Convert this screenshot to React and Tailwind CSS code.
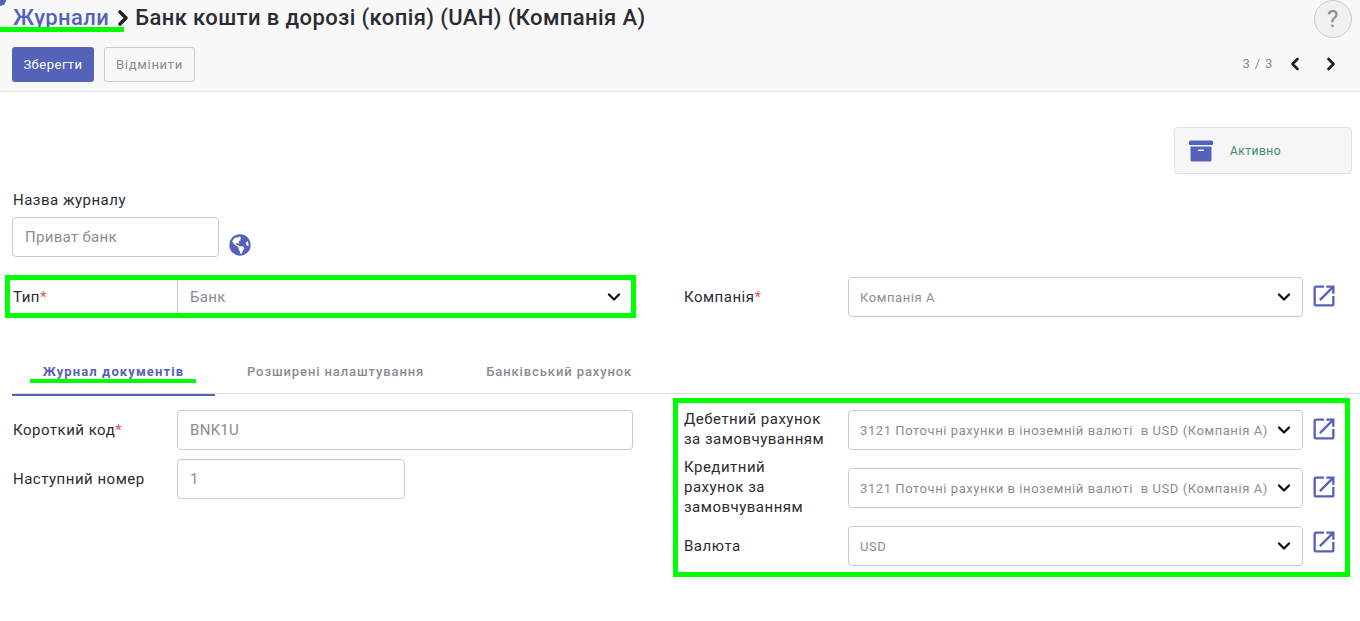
import React from "react";
import { ChevronDown, ChevronLeft, ChevronRight } from "lucide-react";
import { FaArchive, FaGlobeAmericas } from "react-icons/fa";
import { MdOpenInNew } from "react-icons/md";

const Req = () => <span className="text-[#ef5350]">*</span>;

function Select({ value, small = true }) {
  return (
    <div className="flex-1 h-10 min-w-0 flex items-center justify-between bg-white border border-[#c9c9d1] rounded-[4px] pl-[11px] pr-[8px]">
      <span className={small ? "text-[13px] leading-[15px] pt-[1px] tracking-[0.57px] text-[#8b8b93] whitespace-pre" : "text-[15px] pl-[1px] pt-[1px] tracking-[0.3px] text-[#8b8b93]"}>{value}</span>
      <ChevronDown size={20} strokeWidth={2.8} className="text-[#111] shrink-0" />
    </div>
  );
}

function Open({ last = false }) {
  return <MdOpenInNew size={28} className={last ? "text-[#5562ba] ml-[7px] shrink-0 mb-[8px]" : "text-[#5562ba] ml-[7px] shrink-0 mb-[3px]"} />;
}

function Input({ value, w }) {
  return (
    <div className={`h-10 flex items-center bg-white border border-[#c9c9d1] rounded-[4px] px-[12px] text-[15px] tracking-[0.3px] text-[#8b8b93] ${w}`}>{value}</div>
  );
}

const ACCOUNT = "3121 Поточні рахунки в іноземній валюті  в USD (Компанія А)";

export default function App() {
  return (
    <div className="relative h-[621px] overflow-hidden bg-white text-[15px] tracking-[0.5px] text-[#2b2b33] font-['Roboto',sans-serif]">
      {/* header */}
      <header className="h-[92px] bg-[#f8f8f8] border-b border-[#e6e6e6] pl-[12px] pr-[8px]">
        <div className="h-[47px] flex items-start justify-between">
          <h1 className="flex items-center pt-[5px] pl-[1px] text-[22px] font-medium leading-[26px] tracking-[0.4px]">
            <span className="text-[#5562ba]">Журнали</span>
            <ChevronRight size={24} strokeWidth={3.6} className="ml-[2px] text-[#222]" />
            <span>Банк кошти в дорозі (копія) (UAH) (Компанія А)</span>
          </h1>
          <div className="w-[38px] h-[38px] rounded-full bg-[#f0f0f0] border border-[#c9c9d1] flex items-center justify-center text-[24px] text-[#8b8b93]">?</div>
        </div>
        <div className="flex items-center justify-between">
          <div className="flex gap-[10px]">
            <button className="h-[35px] w-[82px] rounded-[3px] bg-[#5562ba] text-white text-[13px] tracking-[0.5px]">Зберегти</button>
            <button className="h-[35px] w-[91px] rounded-[3px] bg-[#f8f8f8] border border-[#c9c9d1] text-[#8b8b93] text-[13px] tracking-[0.7px]">Відмінити</button>
          </div>
          <div className="flex items-center pr-[11px] mt-[-1px]">
            <span className="text-[13px] tracking-[0.8px] text-[#8b8b93] mr-[12px]">3 / 3</span>
            <ChevronLeft size={20} strokeWidth={3.2} className="text-[#222]" />
            <ChevronRight size={20} strokeWidth={3.2} className="text-[#222] ml-[16px]" />
          </div>
        </div>
      </header>

      {/* body */}
      <main className="px-[12px]">
        <div className="flex justify-end pt-[35px] mr-[-4px]">
          <div className="w-[178px] h-[47px] flex items-center bg-[#f6f6f9] border border-[#e0e0e6] rounded-[4px] pl-[14px]">
            <FaArchive size={24} className="text-[#5562ba]" />
            <span className="ml-[17px] text-[12px] tracking-[0.5px] text-[#3f8c5f]">Активно</span>
          </div>
        </div>

        <div className="mt-[16px] pl-[1px] leading-[20px]">Назва журналу</div>
        <div className="mt-[7px] flex items-start">
          <Input value="Приват банк" w="w-[207px]" />
          <FaGlobeAmericas size={22} className="ml-[10px] mt-[17px] text-[#5562ba]" />
        </div>

        <div className="mt-[20px] grid grid-cols-[621px_654px] gap-x-[51px]">
          <div className="flex items-center">
            <div className="w-[165px] pl-[1px]">Тип<Req /></div>
            <Select value="Банк" small={false} />
          </div>
          <div className="flex items-center">
            <div className="w-[164px]">Компанія<Req /></div>
            <Select value="Компанія А" />
            <Open />
          </div>
        </div>

        {/* tabs */}
        <div className="mt-[31px] mr-[-12px] h-[46px] flex border-b border-[#dedede] text-[13px] font-medium tracking-[0.9px]">
          <div className="w-[203px] h-[48px] pt-[1px] flex items-center justify-center border-b-2 border-[#5562ba] text-[#5562ba] font-bold tracking-[1.1px]">Журнал документів</div>
          <div className="flex items-center h-[46px] pt-[1px] ml-[32px] text-[#8b8b93]">Розширені налаштування</div>
          <div className="flex items-center h-[46px] pt-[1px] ml-[62px] text-[#8b8b93]">Банківський рахунок</div>
        </div>

        <div className="mt-[16px] grid grid-cols-[621px_654px] gap-x-[51px]">
          <div className="flex flex-col gap-[9px]">
            <div className="flex items-center">
              <div className="w-[165px] pl-[1px]">Короткий код<Req /></div>
              <Input value="BNK1U" w="flex-1" />
            </div>
            <div className="flex items-center">
              <div className="w-[165px] pl-[1px]">Наступний номер</div>
              <Input value="1" w="w-[228px]" />
            </div>
          </div>
          <div className="flex flex-col gap-[18px] leading-[20px]">
            <div className="flex items-center">
              <div className="w-[164px] mt-[-2px]">Дебетний рахунок<br />за замовчуванням</div>
              <Select value={ACCOUNT} />
              <Open />
            </div>
            <div className="flex items-center h-10">
              <div className="w-[164px] mt-[-3px]">Кредитний<br />рахунок за<br />замовчуванням</div>
              <Select value={ACCOUNT} />
              <Open />
            </div>
            <div className="flex items-center">
              <div className="w-[164px]">Валюта</div>
              <Select value="USD" />
              <Open last />
            </div>
          </div>
        </div>
      </main>

      {/* annotations laid over the page */}
      <div className="absolute left-[-6px] top-[-6px] w-[12px] h-[12px] rounded-full bg-[#5562ba]" />
      <div className="absolute left-0 top-[27px] w-[124px] h-[5px] bg-[#00ff00]" />
      <div className="absolute left-[5px] top-[275px] w-[631px] h-[43px] border-[5px] border-[#00ff00]" />
      <div className="absolute left-[30px] top-[379px] w-[166px] h-[4px] bg-[#00ff00]" />
      <div className="absolute left-[673px] top-[398px] w-[677px] h-[179px] border-[5px] border-[#00ff00]" />
    </div>
  );
}
